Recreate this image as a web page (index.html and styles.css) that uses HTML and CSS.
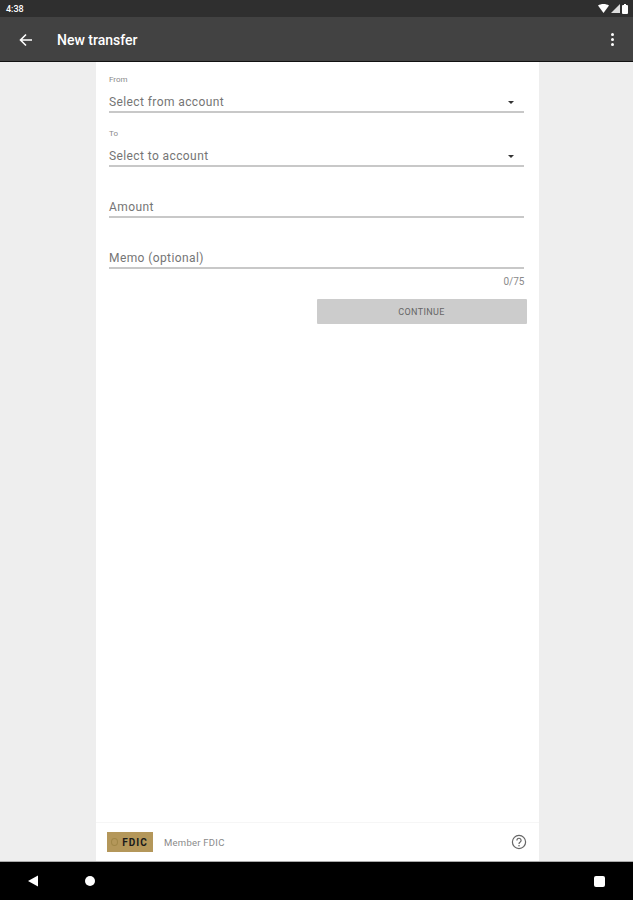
FILE: index.html
```html
<!DOCTYPE html>
<html>
<head>
    <meta charset="UTF-8">
    <title>New transfer</title>
    <link rel="stylesheet" href="styles.css">
</head>
<body>
    <div class="status-bar">
        <span class="clock">4:38</span>
        <div class="status-icons">
            <svg width="11" height="9" viewBox="0 0 11 9"><path d="M0 1.5C3 -.5 8 -.5 11 1.5L5.5 9Z" fill="#fff"/></svg>
            <svg width="9" height="9" viewBox="0 0 9 9"><path d="M9 0V9H0Z" fill="#ddd"/></svg>
            <svg width="6" height="10" viewBox="0 0 6 10"><path d="M1 1H2V0H4V1H5Q6 1 6 2V9Q6 10 5 10H1Q0 10 0 9V2Q0 1 1 1Z" fill="#fff"/></svg>
        </div>
    </div>

    <div class="toolbar">
        <svg class="back" width="14" height="14" viewBox="0 0 14 14"><path d="M13 7H2M7 1.5L1.5 7L7 12.5" fill="none" stroke="#fff" stroke-width="1.6"/></svg>
        <div class="title">New transfer</div>
        <div class="menu"><i></i><i></i><i></i></div>
    </div>

    <div class="content">
        <div class="panel">
            <div class="form">
                <div class="field select-field first">
                    <div class="small-label">From</div>
                    <div class="line"><span>Select from account</span><b class="arrow"></b></div>
                </div>
                <div class="field select-field">
                    <div class="small-label">To</div>
                    <div class="line"><span>Select to account</span><b class="arrow"></b></div>
                </div>
                <div class="field text-field">
                    <div class="line"><span>Amount</span></div>
                </div>
                <div class="field text-field">
                    <div class="line"><span>Memo (optional)</span></div>
                </div>
                <div class="counter">0/75</div>
                <div class="actions">
                    <button disabled>CONTINUE</button>
                </div>
            </div>

            <div class="footer">
                <div class="fdic-logo"><span class="seal"></span>FDIC</div>
                <span class="member">Member FDIC</span>
                <svg class="help" width="16" height="16" viewBox="0 0 16 16">
                    <circle cx="8" cy="8" r="6.6" fill="none" stroke="#666" stroke-width="1.2"/>
                    <path d="M5.9 6.4A2.1 2.1 0 1 1 9.2 8.1C8.4 8.6 8 9 8 10" fill="none" stroke="#666" stroke-width="1.2"/>
                    <circle cx="8" cy="11.8" r=".8" fill="#666"/>
                </svg>
            </div>
        </div>
    </div>

    <div class="nav-bar">
        <svg width="12" height="12" viewBox="0 0 12 12"><path d="M11 0.5V11.5L1 6Z" fill="#fff"/></svg>
        <span class="home"></span>
        <span class="recent"></span>
    </div>
</body>
</html>
```

FILE: styles.css
```css
html, body {
    margin: 0;
    padding: 0;
}
body {
    width: 633px;
    height: 900px;
    display: flex;
    flex-direction: column;
    overflow: hidden;
    font-family: Roboto, 'Liberation Sans', sans-serif;
    background-color: #eeeeee;
}
.status-bar {
    height: 17px;
    flex: none;
    display: flex;
    align-items: center;
    justify-content: space-between;
    padding: 0 5px 0 6px;
    background-color: #2f2f2f;
    color: #ffffff;
}
.clock {
    font-size: 9px;
    font-weight: 500;
}
.status-icons {
    display: flex;
    align-items: center;
    gap: 2px;
}
.toolbar {
    height: 43px;
    padding-top: 1px;
    flex: none;
    display: flex;
    align-items: center;
    background-color: #424242;
    border-bottom: 1px solid #111111;
    color: #ffffff;
}
.back {
    margin-left: 19px;
}
.title {
    margin-left: 24px;
    font-size: 14px;
    font-weight: 500;
    flex: 1;
}
.menu {
    display: flex;
    flex-direction: column;
    gap: 2px;
    margin-right: 19px;
}
.menu i {
    width: 3px;
    height: 3px;
    border-radius: 50%;
    background-color: #ffffff;
}
.content {
    flex: 1;
    display: flex;
    justify-content: center;
    min-height: 0;
    padding-left: 1px;
}
.panel {
    width: 443px;
    display: flex;
    flex-direction: column;
    background-color: #ffffff;
}
.form {
    flex: 1;
    padding: 0 12px 0 13.5px;
}
.small-label {
    font-size: 8px;
    line-height: 10px;
    color: #8a8a8a;
}
.line {
    display: flex;
    align-items: center;
    justify-content: space-between;
    height: 18px;
    padding-top: 2px;
    margin-right: 3px;
    border-bottom: 2px solid #c8c8c8;
    font-size: 12px;
    color: #757575;
    letter-spacing: 0.4px;
}
.select-field {
    margin-top: 16px;
}
.select-field.first {
    margin-top: 13px;
}
.select-field .small-label {
    margin-bottom: 6px;
}
.text-field {
    margin-top: 29px;
}
.arrow {
    width: 0;
    height: 0;
    margin-right: 10px;
    border-left: 3px solid transparent;
    border-right: 3px solid transparent;
    border-top: 3px solid #333333;
}
.counter {
    margin: 7px 2px 0 0;
    font-size: 10px;
    line-height: 11px;
    text-align: right;
    color: #8a8a8a;
}
.actions {
    display: flex;
    justify-content: flex-end;
    margin-top: 12px;
}
button {
    width: 210px;
    height: 25px;
    padding: 0;
    border: none;
    border-radius: 1px;
    background-color: #cccccc;
    color: #666666;
    font-family: inherit;
    font-size: 9px;
    font-weight: 400;
    letter-spacing: 0.4px;
}
.footer {
    height: 38px;
    flex: none;
    display: flex;
    align-items: center;
    padding: 0 12px 0 11px;
    border-top: 1px solid #f6f6f6;
}
.fdic-logo {
    width: 46px;
    height: 20px;
    display: flex;
    align-items: center;
    justify-content: center;
    gap: 4px;
    background-color: #b4975a;
    color: #1a1a1a;
    font-size: 10px;
    font-weight: 700;
    letter-spacing: 1px;
}
.seal {
    width: 7px;
    height: 8px;
    border: 1px solid #a08648;
    border-radius: 50%;
    box-sizing: border-box;
}
.member {
    margin-left: 11.5px;
    flex: 1;
    font-size: 9.5px;
    letter-spacing: 0.25px;
    color: #8a8a8a;
}
.nav-bar {
    height: 39px;
    flex: none;
    display: flex;
    align-items: center;
    background-color: #000000;
    border-top: 1px solid #aaaaaa;
    box-sizing: border-box;
    padding-left: 27px;
}
.home {
    width: 10px;
    height: 10px;
    margin-left: 46px;
    border-radius: 50%;
    background-color: #ffffff;
}
.recent {
    width: 11px;
    height: 11px;
    margin-left: 499px;
    border-radius: 2px;
    background-color: #ffffff;
}
```
